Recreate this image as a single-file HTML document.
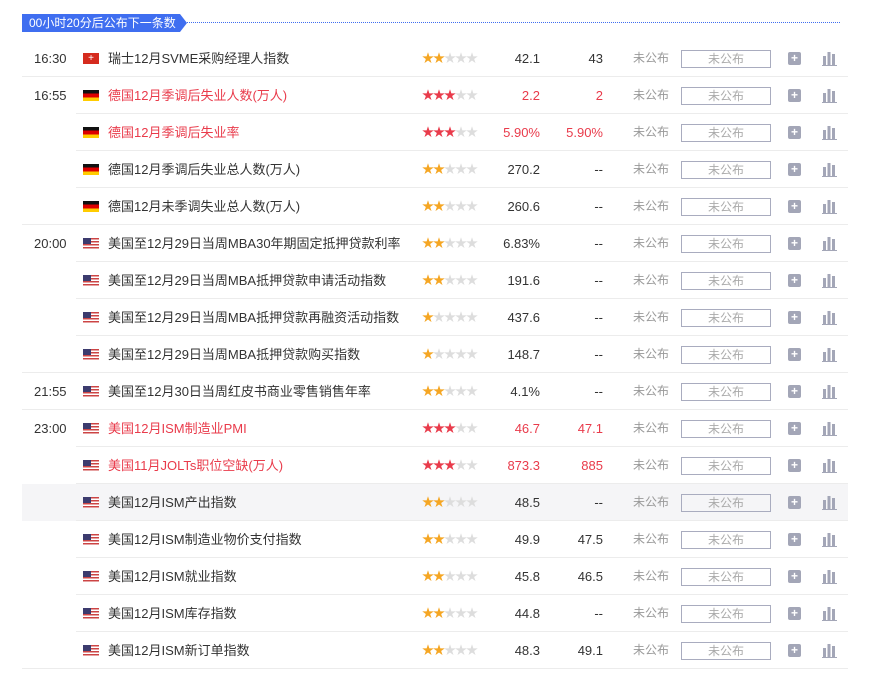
<!DOCTYPE html>
<html><head><meta charset="utf-8">
<style>
*{margin:0;padding:0;box-sizing:border-box}
body{width:872px;height:692px;background:#fff;font-family:"Liberation Sans","Noto Sans CJK SC",sans-serif;font-size:13px;color:#333;position:relative;overflow:hidden}
.tag{position:absolute;left:22px;top:14px;height:18px;width:158px;background:#3f6ef0;color:#fff;font-size:12px;line-height:18px;padding-left:7px}
.tag:after{content:"";position:absolute;right:-7px;top:0;border-left:7px solid #3f6ef0;border-top:9px solid transparent;border-bottom:9px solid transparent}
.dot{position:absolute;left:187px;top:22px;width:653px;border-top:1px dotted #3f6ef0}
.r{position:absolute;left:22px;width:826px;height:37px}
.r.hl{background:#f5f5f7}
.ln{position:absolute;bottom:0;height:1px;background:#ececec;right:0}
.r span{position:absolute;top:0;height:37px;line-height:37px;white-space:nowrap}
.t{left:12px}
.f{position:absolute;left:61px;top:13px;width:16px;height:11px}
.r span.n{left:86px}
.r span.s{left:400px;font-size:12px;letter-spacing:-1px;color:#ddd}
.r span.a{right:308px}
.r span.p{right:245px}
.r span.u{left:611px;color:#999;font-size:12px}
.b{position:absolute;left:659px;top:10px;width:90px;height:18px;border:1px solid #a9acbf;color:#aaa;font-size:12px;text-align:center;line-height:16px}
.pl{position:absolute;left:766px;top:12px;width:13px;height:13px;background:#a3a6b7;border-radius:2px;color:#fff;font-size:12px;line-height:13px;text-align:center;font-weight:bold}
.c{position:absolute;left:800px;top:11px;width:15px;height:15px}
.red{color:#e93b4b}
.o{color:#f5a623}.rs{color:#e93b4b}
.de{background:linear-gradient(#111 0 33%,#d00 33% 66%,#fc0 66%)}
.ch2{background:#d52b1e}
.us{background:repeating-linear-gradient(#c44 0 1.5px,#fff 1.5px 3px)}
.us:before{content:"";position:absolute;left:0;top:0;width:8px;height:6px;background:#3c3b6e}
</style></head><body>
<div class="tag">00小时20分后公布下一条数据</div><div class="dot"></div>
<svg width="0" height="0" style="position:absolute"><defs><g id="ci"><rect x="1" y="5" width="3" height="10" fill="#a3a6b7"/><rect x="5.5" y="1" width="3" height="14" fill="#a3a6b7"/><rect x="10" y="3" width="3" height="12" fill="#a3a6b7"/><rect x="0" y="14" width="15" height="1" fill="#a3a6b7"/></g></defs></svg>

<div class="r" style="top:40px"><div class="ln" style="left:0"></div><span class="t">16:30</span><div class="f ch2" style="color:#fff;font-size:10px;line-height:11px;text-align:center">+</div><span class="n">瑞士12月SVME采购经理人指数</span><span class="s"><b class="o">★★</b>★★★</span><span class="a">42.1</span><span class="p">43</span><span class="u">未公布</span><div class="b">未公布</div><div class="pl">+</div><svg class="c" viewBox="0 0 15 15"><use href="#ci"/></svg></div>

<div class="r" style="top:77px"><div class="ln" style="left:54px"></div><span class="t">16:55</span><div class="f de"></div><span class="n red">德国12月季调后失业人数(万人)</span><span class="s"><b class="rs">★★★</b>★★</span><span class="a red">2.2</span><span class="p red">2</span><span class="u">未公布</span><div class="b">未公布</div><div class="pl">+</div><svg class="c" viewBox="0 0 15 15"><use href="#ci"/></svg></div>

<div class="r" style="top:114px"><div class="ln" style="left:54px"></div><div class="f de"></div><span class="n red">德国12月季调后失业率</span><span class="s"><b class="rs">★★★</b>★★</span><span class="a red">5.90%</span><span class="p red">5.90%</span><span class="u">未公布</span><div class="b">未公布</div><div class="pl">+</div><svg class="c" viewBox="0 0 15 15"><use href="#ci"/></svg></div>

<div class="r" style="top:151px"><div class="ln" style="left:54px"></div><div class="f de"></div><span class="n">德国12月季调后失业总人数(万人)</span><span class="s"><b class="o">★★</b>★★★</span><span class="a">270.2</span><span class="p">--</span><span class="u">未公布</span><div class="b">未公布</div><div class="pl">+</div><svg class="c" viewBox="0 0 15 15"><use href="#ci"/></svg></div>

<div class="r" style="top:188px"><div class="ln" style="left:0"></div><div class="f de"></div><span class="n">德国12月未季调失业总人数(万人)</span><span class="s"><b class="o">★★</b>★★★</span><span class="a">260.6</span><span class="p">--</span><span class="u">未公布</span><div class="b">未公布</div><div class="pl">+</div><svg class="c" viewBox="0 0 15 15"><use href="#ci"/></svg></div>

<div class="r" style="top:225px"><div class="ln" style="left:54px"></div><span class="t">20:00</span><div class="f us"></div><span class="n">美国至12月29日当周MBA30年期固定抵押贷款利率</span><span class="s"><b class="o">★★</b>★★★</span><span class="a">6.83%</span><span class="p">--</span><span class="u">未公布</span><div class="b">未公布</div><div class="pl">+</div><svg class="c" viewBox="0 0 15 15"><use href="#ci"/></svg></div>

<div class="r" style="top:262px"><div class="ln" style="left:54px"></div><div class="f us"></div><span class="n">美国至12月29日当周MBA抵押贷款申请活动指数</span><span class="s"><b class="o">★★</b>★★★</span><span class="a">191.6</span><span class="p">--</span><span class="u">未公布</span><div class="b">未公布</div><div class="pl">+</div><svg class="c" viewBox="0 0 15 15"><use href="#ci"/></svg></div>

<div class="r" style="top:299px"><div class="ln" style="left:54px"></div><div class="f us"></div><span class="n">美国至12月29日当周MBA抵押贷款再融资活动指数</span><span class="s"><b class="o">★</b>★★★★</span><span class="a">437.6</span><span class="p">--</span><span class="u">未公布</span><div class="b">未公布</div><div class="pl">+</div><svg class="c" viewBox="0 0 15 15"><use href="#ci"/></svg></div>

<div class="r" style="top:336px"><div class="ln" style="left:0"></div><div class="f us"></div><span class="n">美国至12月29日当周MBA抵押贷款购买指数</span><span class="s"><b class="o">★</b>★★★★</span><span class="a">148.7</span><span class="p">--</span><span class="u">未公布</span><div class="b">未公布</div><div class="pl">+</div><svg class="c" viewBox="0 0 15 15"><use href="#ci"/></svg></div>

<div class="r" style="top:373px"><div class="ln" style="left:0"></div><span class="t">21:55</span><div class="f us"></div><span class="n">美国至12月30日当周红皮书商业零售销售年率</span><span class="s"><b class="o">★★</b>★★★</span><span class="a">4.1%</span><span class="p">--</span><span class="u">未公布</span><div class="b">未公布</div><div class="pl">+</div><svg class="c" viewBox="0 0 15 15"><use href="#ci"/></svg></div>

<div class="r" style="top:410px"><div class="ln" style="left:54px"></div><span class="t">23:00</span><div class="f us"></div><span class="n red">美国12月ISM制造业PMI</span><span class="s"><b class="rs">★★★</b>★★</span><span class="a red">46.7</span><span class="p red">47.1</span><span class="u">未公布</span><div class="b">未公布</div><div class="pl">+</div><svg class="c" viewBox="0 0 15 15"><use href="#ci"/></svg></div>

<div class="r" style="top:447px"><div class="ln" style="left:54px"></div><div class="f us"></div><span class="n red">美国11月JOLTs职位空缺(万人)</span><span class="s"><b class="rs">★★★</b>★★</span><span class="a red">873.3</span><span class="p red">885</span><span class="u">未公布</span><div class="b">未公布</div><div class="pl">+</div><svg class="c" viewBox="0 0 15 15"><use href="#ci"/></svg></div>

<div class="r hl" style="top:484px"><div class="ln" style="left:54px"></div><div class="f us"></div><span class="n">美国12月ISM产出指数</span><span class="s"><b class="o">★★</b>★★★</span><span class="a">48.5</span><span class="p">--</span><span class="u">未公布</span><div class="b">未公布</div><div class="pl">+</div><svg class="c" viewBox="0 0 15 15"><use href="#ci"/></svg></div>

<div class="r" style="top:521px"><div class="ln" style="left:54px"></div><div class="f us"></div><span class="n">美国12月ISM制造业物价支付指数</span><span class="s"><b class="o">★★</b>★★★</span><span class="a">49.9</span><span class="p">47.5</span><span class="u">未公布</span><div class="b">未公布</div><div class="pl">+</div><svg class="c" viewBox="0 0 15 15"><use href="#ci"/></svg></div>

<div class="r" style="top:558px"><div class="ln" style="left:54px"></div><div class="f us"></div><span class="n">美国12月ISM就业指数</span><span class="s"><b class="o">★★</b>★★★</span><span class="a">45.8</span><span class="p">46.5</span><span class="u">未公布</span><div class="b">未公布</div><div class="pl">+</div><svg class="c" viewBox="0 0 15 15"><use href="#ci"/></svg></div>

<div class="r" style="top:595px"><div class="ln" style="left:54px"></div><div class="f us"></div><span class="n">美国12月ISM库存指数</span><span class="s"><b class="o">★★</b>★★★</span><span class="a">44.8</span><span class="p">--</span><span class="u">未公布</span><div class="b">未公布</div><div class="pl">+</div><svg class="c" viewBox="0 0 15 15"><use href="#ci"/></svg></div>

<div class="r" style="top:632px"><div class="ln" style="left:0"></div><div class="f us"></div><span class="n">美国12月ISM新订单指数</span><span class="s"><b class="o">★★</b>★★★</span><span class="a">48.3</span><span class="p">49.1</span><span class="u">未公布</span><div class="b">未公布</div><div class="pl">+</div><svg class="c" viewBox="0 0 15 15"><use href="#ci"/></svg></div>
</body></html>
